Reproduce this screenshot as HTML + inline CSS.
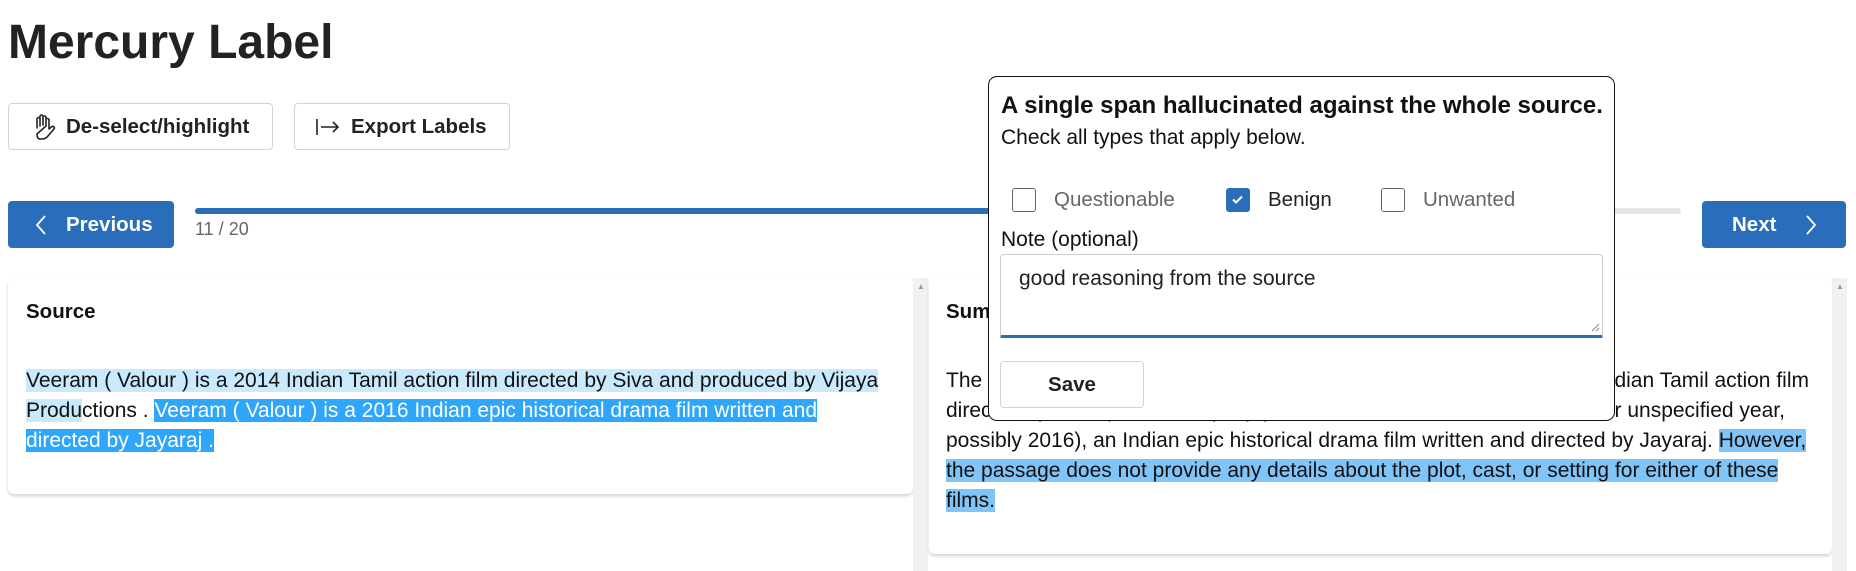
<!DOCTYPE html>
<html><head><meta charset="utf-8"><style>
*{box-sizing:border-box;margin:0;padding:0}
body{width:1856px;height:571px;overflow:hidden;background:#fff;font-family:"Liberation Sans",sans-serif;color:#222;position:relative}
.a{position:absolute}
h1{position:absolute;left:8px;top:15px;font-size:48px;font-weight:bold;line-height:56px;color:#222}
.btn{position:absolute;border:1px solid #d3d3d3;border-radius:4px;background:#fff;font-weight:bold;font-size:20.5px;display:flex;align-items:center;color:#222}
.blue{position:absolute;background:#2a6ebb;color:#fff;border-radius:4px;font-weight:bold;font-size:20.5px;display:flex;align-items:center}
.card{position:absolute;background:#fff;border-radius:6px;box-shadow:0 2px 3px rgba(0,0,0,.18)}
.txt{position:absolute;font-size:21px;line-height:30px;color:#111}
.h1l{background:#c8eafc}
.h2{background:#2ea6fb;color:#fff}
.h3{background:#80c4f8}
.sb{position:absolute;background:#f1f1f1;width:15px}
.cb{position:absolute;width:24px;height:24px;border:1.5px solid #666;border-radius:3px;top:188px}
.lab{position:absolute;font-size:20.5px;color:#666;top:188px;line-height:24px}
</style></head><body>
<h1>Mercury Label</h1>
<div class="btn" style="left:8px;top:103px;width:265px;height:47px;padding-left:21px">
<svg width="26" height="28" viewBox="0 0 26 28" fill="none" stroke="#222" stroke-width="1.6" stroke-linecap="round" stroke-linejoin="round"><path d="M7 15V6a1.5 1.5 0 0 1 3 0v7M10 12V3.5a1.5 1.5 0 0 1 3 0V12M13 12V4.5a1.5 1.5 0 0 1 3 0V13M16 13V7a1.5 1.5 0 0 1 3 0v9l3-2.5a1.6 1.6 0 0 1 2 2.4L18 23c-1.5 2-3 3-6 3H10c-2.5 0-3-2.5-3-5z"/></svg>
<span style="margin-left:10px">De-select/highlight</span></div>
<div class="btn" style="left:294px;top:103px;width:216px;height:47px;padding-left:20px">
<svg width="26" height="20" viewBox="0 0 26 20" fill="none" stroke="#222" stroke-width="1.6"><path d="M2 2v16M6 10h17M18 5l5 5-5 5"/></svg>
<span style="margin-left:10px">Export Labels</span></div>
<div class="blue" style="left:8px;top:201px;width:166px;height:47px;padding-left:26px">
<svg width="14" height="22" viewBox="0 0 14 22" fill="none" stroke="#fff" stroke-width="1.8"><path d="M11 2L3 11l8 9"/></svg>
<span style="margin-left:18px">Previous</span></div>
<div class="a" style="left:195px;top:208px;width:1486px;height:6px;background:#e6e6e6;border-radius:3px"></div>
<div class="a" style="left:195px;top:208px;width:820px;height:6px;background:#2a6ebb;border-radius:3px"></div>
<div class="a" style="left:195px;top:219px;font-size:18px;color:#666">11 / 20</div>
<div class="blue" style="left:1702px;top:201px;width:144px;height:47px;padding-left:30px">
<span>Next</span>
<svg style="margin-left:28px" width="14" height="22" viewBox="0 0 14 22" fill="none" stroke="#fff" stroke-width="1.8"><path d="M3 2l8 9-8 9"/></svg></div>

<div class="card" style="left:8px;top:278px;width:905px;height:216px"></div>
<div class="sb" style="left:913px;top:278px;height:293px"></div>
<div class="a" style="left:917px;top:282px;font-size:8px;color:#999">▲</div>
<div class="a" style="left:26px;top:300px;font-size:20.5px;font-weight:bold;color:#111">Source</div>
<div class="txt" style="left:26px;top:366px;width:880px;white-space:nowrap">
<span class="h1l">Veeram ( Valour ) is a 2014 Indian Tamil action film directed by Siva and produced by Vijaya<br>Produ</span>ctions . <span class="h2">Veeram ( Valour ) is a 2016 Indian epic historical drama film written and<br>directed by Jayaraj .</span></div>

<div class="card" style="left:929px;top:278px;width:903px;height:276px"></div>
<div class="sb" style="left:1832px;top:278px;height:293px"></div>
<div class="a" style="left:1836px;top:282px;font-size:8px;color:#999">▲</div>
<div class="a" style="left:946px;top:300px;font-size:20.5px;font-weight:bold;color:#111">Summary</div>
<div class="txt" style="left:946px;top:366px;width:880px;white-space:nowrap">The passage mentions two films titled Veeram (Valour): one is a 2014 Indian Tamil action film<br>directed by Siva, produced by Vijaya Productions, the other from another unspecified year,<br>possibly 2016), an Indian epic historical drama film written and directed by Jayaraj. <span class="h3">However,</span><br><span class="h3">the passage does not provide any details about the plot, cast, or setting for either of these</span><br><span class="h3">films.</span></div>

<div class="a" style="left:988px;top:76px;width:627px;height:345px;background:#fff;border:1.5px solid #111;border-radius:9px"></div>
<div class="a" style="left:1001px;top:92px;font-size:24px;font-weight:bold;color:#111;white-space:nowrap">A single span hallucinated against the whole source.</div>
<div class="a" style="left:1001px;top:126px;font-size:21px;color:#111">Check all types that apply below.</div>
<div class="cb" style="left:1012px"></div><div class="lab" style="left:1054px">Questionable</div>
<div class="cb" style="left:1226px;background:#2a6ebb;border-color:#2a6ebb"><svg width="21" height="21" viewBox="0 0 21 21" fill="none" stroke="#fff" stroke-width="2"><path d="M6 10.5l3 3 6-6"/></svg></div>
<div class="lab" style="left:1268px;color:#222">Benign</div>
<div class="cb" style="left:1381px"></div><div class="lab" style="left:1423px">Unwanted</div>
<div class="a" style="left:1001px;top:228px;font-size:21px;color:#111">Note (optional)</div>
<div class="a" style="left:1000px;top:254px;width:603px;height:84px;border:1px solid #ccc;border-bottom:3px solid #2a6ebb;border-radius:4px 4px 2px 2px"></div>
<div class="a" style="left:1019px;top:267px;font-size:21px;color:#222">good reasoning from the source</div>
<svg class="a" style="left:1590px;top:322px" width="10" height="10" viewBox="0 0 10 10" stroke="#888"><path d="M2 9L9 2M6 9l3-3"/></svg>
<div class="btn" style="left:1000px;top:361px;width:144px;height:47px;justify-content:center">Save</div>
</body></html>
